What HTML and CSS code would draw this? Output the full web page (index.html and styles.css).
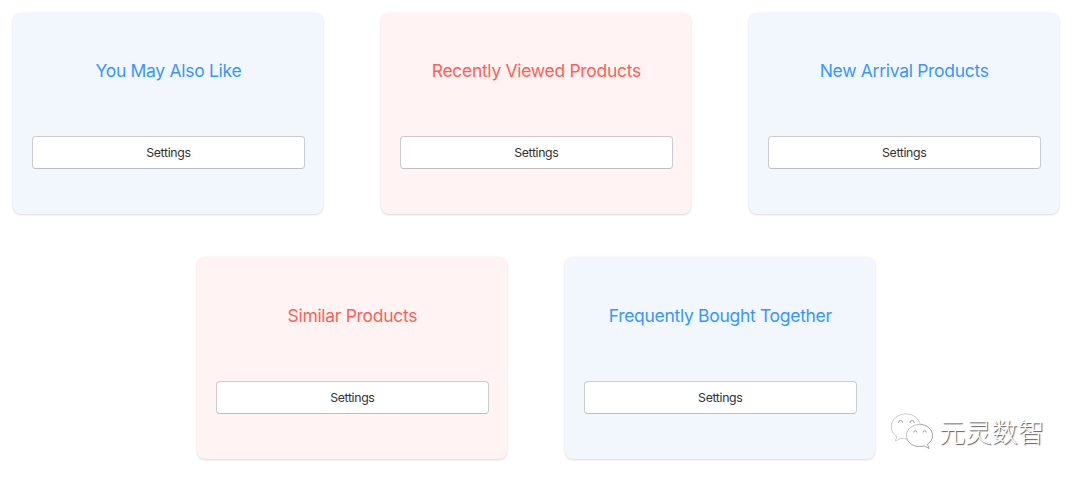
FILE: index.html
```
<!DOCTYPE html>
<html lang="en">
<head>
    <meta charset="UTF-8">
    <meta name="viewport" content="width=device-width, initial-scale=1.0">
    <title>Product Recommendations</title>
    <link rel="stylesheet" href="styles.css">
</head>
<body>
    <main class="cards">
        <section class="card blue">
            <h2>You May Also Like</h2>
            <button>Settings</button>
        </section>
        <section class="card red">
            <h2>Recently Viewed Products</h2>
            <button>Settings</button>
        </section>
        <section class="card blue">
            <h2>New Arrival Products</h2>
            <button>Settings</button>
        </section>
        <section class="card red">
            <h2>Similar Products</h2>
            <button>Settings</button>
        </section>
        <section class="card blue">
            <h2>Frequently Bought Together</h2>
            <button>Settings</button>
        </section>
    </main>

    <div class="watermark" lang="zh">
        <svg class="watermark-icon" width="44" height="38" viewBox="0 0 44 38">
            <path class="bubble-back" d="M16 2C8 2 1.500 7.500 1.500 15c0 4 2 7.500 5.500 9.500L5.500 29l5.500-3c2 .6 3.500.8 5 .8 8 0 14.500-5 14.500-12S24 2 16 2z"/>
            <path class="bubble-front" d="M29.500 12.500c-7.300 0-13 4.800-13 11s5.700 11 13 11c1.700 0 3.200-.2 4.700-.7l4.800 2.600-1.700-4.100c3.300-2 5.200-5.200 5.200-8.800 0-6.200-5.700-11-13-11z"/>
            <path class="eye" d="M8.500 11v-.5a2 2 0 0 1 4 0v.5M20 11v-.5a2 2 0 0 1 4 0v.5M23.600 20.500a1.700 1.700 0 0 1 3.400 0M33 20.500a1.700 1.700 0 0 1 3.400 0"/>
        </svg>
        <span>元灵数智</span>
    </div>
</body>
</html>
```

FILE: styles.css
```
body {
    font-family: Inter, "Liberation Sans", sans-serif;
    margin: 0;
    min-height: 480px;
    background-color: #fff;
}
.cards {
    display: flex;
    flex-wrap: wrap;
    justify-content: center;
    gap: 43px 57.9px;
    width: 1046px;
    padding: 12.5px 0 20px 13.3px;
}
.card {
    box-sizing: border-box;
    width: 310px;
    height: 201.5px;
    padding: 45.5px 18.500px 0;
    border-radius: 8px;
    box-shadow: 0 0 3px rgba(23, 24, 24, 0.06), 0 1px 2px rgba(0, 0, 0, 0.13);
    text-align: center;
}
.card h2 {
    margin: 0 0 53px;
    font-size: 17.500px;
    font-weight: 400;
    letter-spacing: -0.3px;
    line-height: 25px;
}
.blue {
    background-color: #f2f7fe;
}
.blue h2 {
    color: #3896ff;
}
.red {
    background-color: #fff4f3;
}
.red h2 {
    color: #ff5f57;
}
button {
    display: block;
    width: 100%;
    height: 33px;
    padding: 0;
    border: 1px solid #c9ccd0;
    border-bottom-color: #babfc3;
    border-radius: 4px;
    background-color: #fff;
    color: #303234;
    font-family: inherit;
    font-size: 12.300px;
    letter-spacing: -0.35px;
    cursor: pointer;
}
/* floats over the bottom right corner */
.watermark {
    position: absolute;
    left: 890px;
    top: 411.5px;
    display: flex;
    align-items: center;
    gap: 5px;
    color: #fff;
    font-family: "Noto Sans CJK SC", sans-serif;
    font-size: 26.300px;
    font-weight: 300;
    line-height: 38px;
    text-shadow: 1px 1px 1px #555;
}
.watermark-icon {
    fill: #fff;
    filter: drop-shadow(0 0.8px 0.5px #777);
}
.bubble-back {
    stroke: #ddd;
    stroke-width: 0.5;
}
.bubble-front {
    stroke: #999;
    stroke-width: 0.6;
}
.eye {
    fill: none;
    stroke: #999;
    stroke-width: 0.9;
}
```
